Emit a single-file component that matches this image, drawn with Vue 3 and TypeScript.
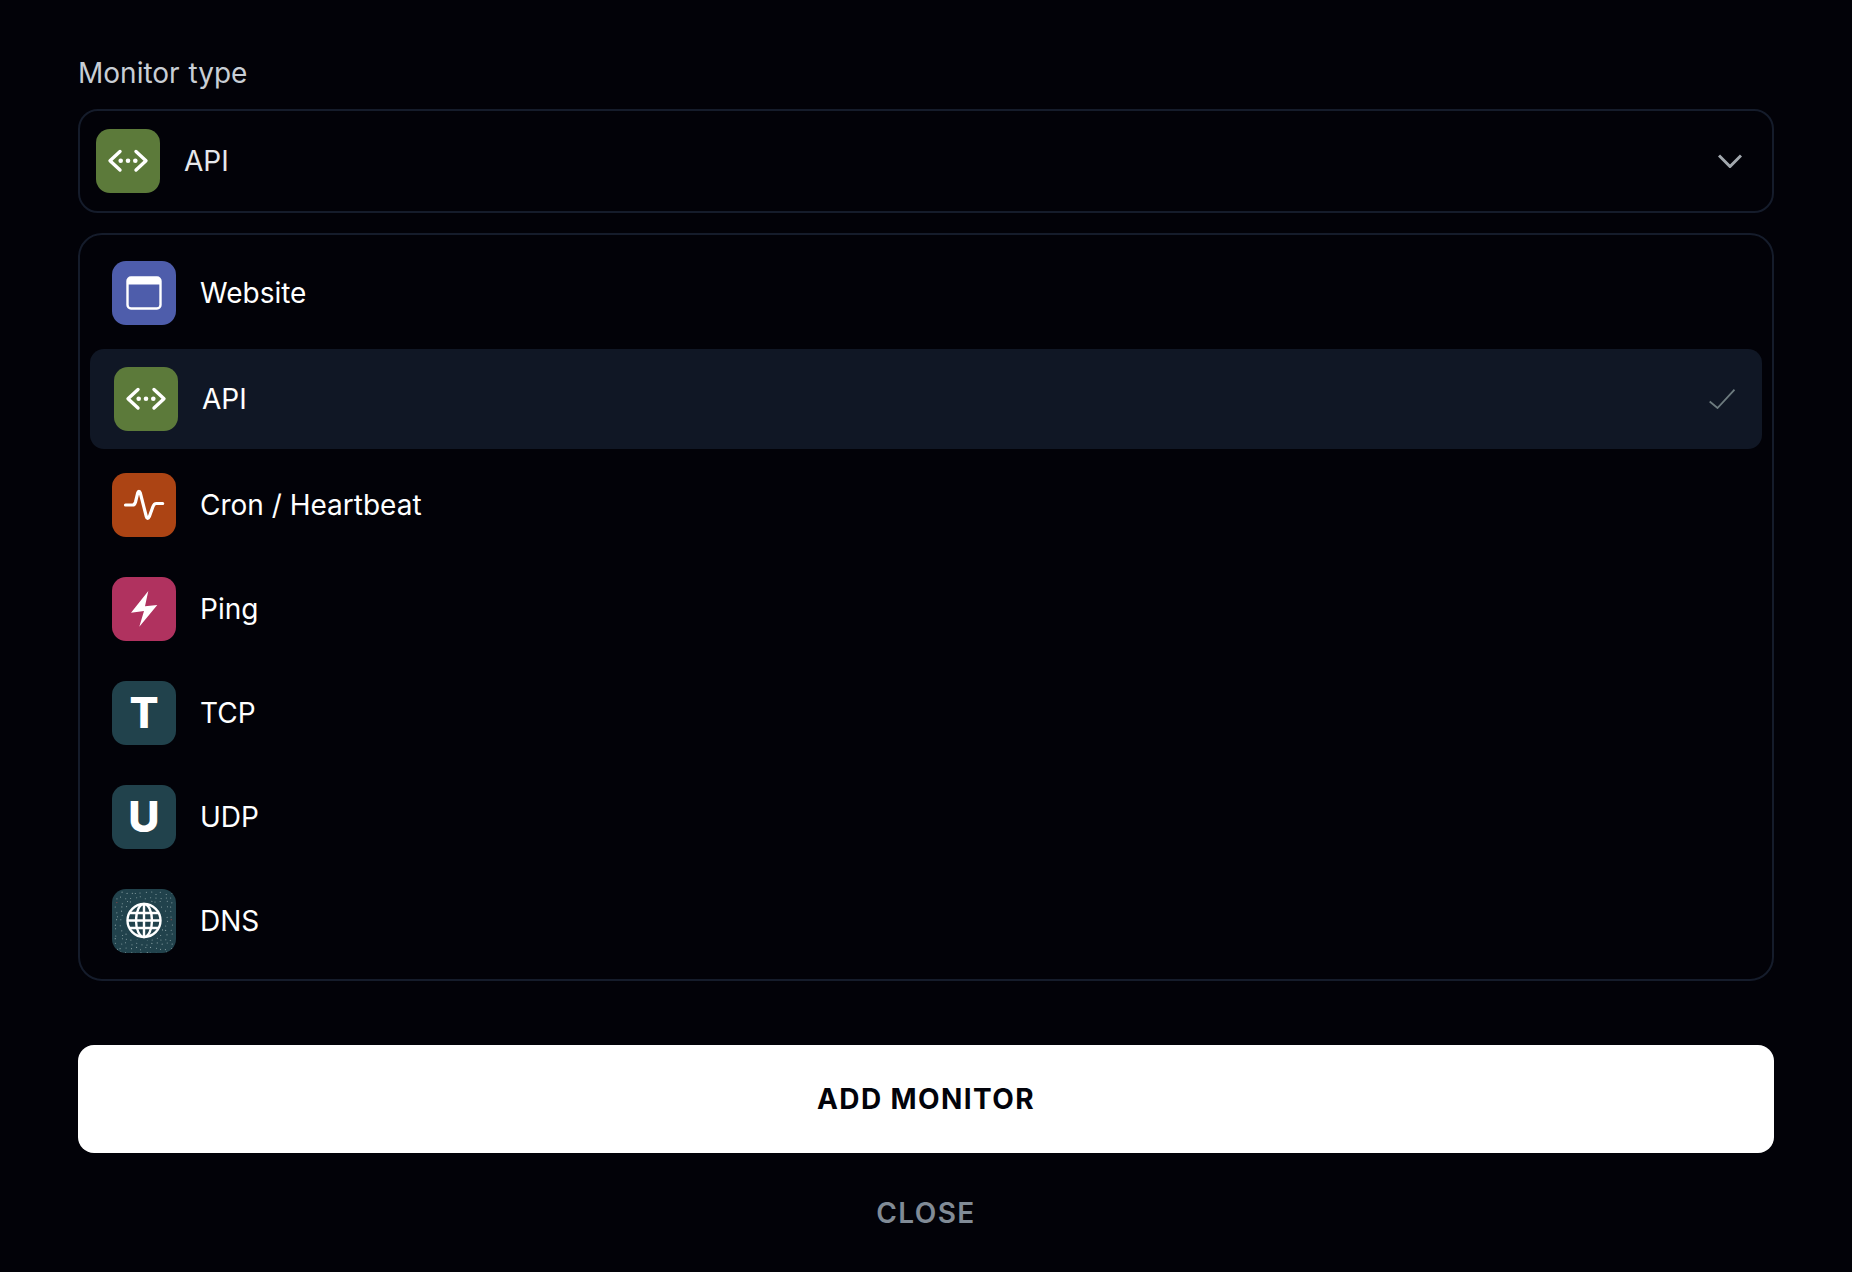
<script setup lang="ts">
type Row = { name: string; kind: string; selected?: boolean };
const rows: Row[] = [
  { name: 'Website', kind: 'web' },
  { name: 'API', kind: 'api', selected: true },
  { name: 'Cron / Heartbeat', kind: 'cron' },
  { name: 'Ping', kind: 'ping' },
  { name: 'TCP', kind: 'tcp' },
  { name: 'UDP', kind: 'udp' },
  { name: 'DNS', kind: 'dns' },
];
// Seeded speckle for the DNS tile
let seed = 17;
const rnd = () => {
  seed = (seed * 16807) % 2147483647;
  return seed / 2147483647;
};
const dots: { x: number; y: number; red: boolean }[] = [];
for (let y = 3; y < 63; y += 4.6) {
  for (let x = 3; x < 63; x += 5) {
    dots.push({ x: x + rnd() * 2.6, y: y + rnd() * 2.6, red: rnd() < 0.02 });
  }
}
</script>

<template>
  <main class="page">
    <div class="label">Monitor type</div>
    <div class="select">
      <span class="tile api">
        <svg viewBox="0 0 64 64" class="glyph">
          <path d="M24 22.500 14 31.700 24 41M40 22.500 50 31.700 40 41" fill="none" stroke="#fff" stroke-width="3.400" stroke-linecap="round" stroke-linejoin="round" />
          <circle cx="24.700" cy="31.700" r="2.300" fill="#fff" /><circle cx="32" cy="31.700" r="2.300" fill="#fff" /><circle cx="39.300" cy="31.700" r="2.300" fill="#fff" />
        </svg>
      </span>
      <span class="select-text">API</span>
      <svg class="chevron" viewBox="0 0 24 14">
        <path d="M1 1.500 12 12.500 23 1.500" fill="none" stroke="#a2a8ae" stroke-width="3" />
      </svg>
    </div>

    <div class="list">
      <div v-for="r in rows" :key="r.name" class="row" :class="{ selected: r.selected }">
        <span class="tile" :class="r.kind">
          <svg v-if="r.kind === 'web'" viewBox="0 0 64 64" class="glyph">
            <rect x="15.500" y="16.500" width="33" height="31" rx="3.500" fill="none" stroke="#fff" stroke-width="2.400" />
            <path d="M16 20a3.500 3.500 0 0 1 3.500-3.500h25A3.500 3.500 0 0 1 48 20v3.500H16z" fill="#fff" />
          </svg>
          <svg v-else-if="r.kind === 'api'" viewBox="0 0 64 64" class="glyph">
            <path d="M24 22.500 14 31.700 24 41M40 22.500 50 31.700 40 41" fill="none" stroke="#fff" stroke-width="3.400" stroke-linecap="round" stroke-linejoin="round" />
            <circle cx="24.700" cy="31.700" r="2.300" fill="#fff" /><circle cx="32" cy="31.700" r="2.300" fill="#fff" /><circle cx="39.300" cy="31.700" r="2.300" fill="#fff" />
          </svg>
          <svg v-else-if="r.kind === 'cron'" viewBox="0 0 64 64" class="glyph">
            <path d="M13.500 32h7c1.600 0 2.400-.8 3-3l2.200-9c.5-2.200 2-2.200 2.600 0l6 23.500c.6 2.400 2 2.400 3 .2l3.600-10c.7-2 1.600-3.200 3.500-3.200h6.300" fill="none" stroke="#fff" stroke-width="3.200" stroke-linecap="round" stroke-linejoin="round" />
          </svg>
          <svg v-else-if="r.kind === 'ping'" viewBox="0 0 64 64" class="glyph">
            <path d="M36.300 14 19 35.700 32 34 27.300 49.700 45.300 28 33 29.300z" fill="#fff" />
          </svg>
          <span v-else-if="r.kind === 'tcp'" class="letter">T</span>
          <span v-else-if="r.kind === 'udp'" class="letter">U</span>
          <svg v-else viewBox="0 0 64 64" class="glyph">
            <circle v-for="(d, i) in dots" :key="i" :cx="d.x" :cy="d.y" r="0.55" :fill="d.red ? '#a34a4a' : '#8fa5a8'" />
            <circle cx="32" cy="31.500" r="20" fill="#21424c" />
            <g fill="none" stroke="#fff" stroke-width="2.400">
              <circle cx="32" cy="31.500" r="16.500" />
              <ellipse cx="32" cy="31.500" rx="8" ry="16.500" />
              <path d="M32 15v33M15.500 31.500h33M18 24h28M18 39h28" />
            </g>
          </svg>
        </span>
        <span class="name">{{ r.name }}</span>
        <svg v-if="r.selected" class="check" viewBox="0 0 26 20">
          <path d="M0.700 12.500 8.500 19 25.500 0.700" fill="none" stroke="#6d7b7f" stroke-width="1.800" />
        </svg>
      </div>
    </div>

    <button class="add" type="button">ADD MONITOR</button>
    <button class="close" type="button">CLOSE</button>
  </main>
</template>

<style>
html, body { background: #020208; }
</style>

<style scoped>
.page {
  box-sizing: border-box;
  width: 1852px;
  height: 1272px;
  padding: 53px 78px 0;
  background: #020208;
  display: flex;
  flex-direction: column;
  font-family: Inter, "Liberation Sans", sans-serif;
}
.label {
  font-size: 28px;
  line-height: 40px;
  color: #c8ced5;
  margin-bottom: 16px;
  word-spacing: 1px;
}
.select {
  box-sizing: border-box;
  height: 104px;
  border: 2px solid #151c2b;
  border-radius: 20px;
  padding: 0 30px 0 16px;
  display: flex;
  align-items: center;
  gap: 24px;
  margin-bottom: 20px;
}
.select-text {
  font-size: 28px;
  color: #e6e8eb;
  flex: 1;
}
.chevron { width: 24px; height: 14px; }
.list {
  box-sizing: border-box;
  height: 748px;
  border: 2px solid #151c2b;
  border-radius: 24px;
  padding: 6px 10px;
  margin-bottom: 64px;
}
.row {
  height: 104px;
  display: flex;
  align-items: center;
  gap: 24px;
  padding: 0 22px;
  font-size: 28px;
  color: #fff;
}
.row.selected {
  height: 100px;
  margin: 4px 0;
  padding: 0 24px;
  background: #101725;
  border-radius: 14px;
}
.name { flex: 1; }
.check { width: 26px; height: 20px; margin-right: 3px; }
.tile {
  width: 64px;
  height: 64px;
  flex: none;
  border-radius: 14px;
  display: flex;
  align-items: center;
  justify-content: center;
  overflow: hidden;
}
.glyph { width: 64px; height: 64px; display: block; }
.web { background: #4e5dab; }
.api { background: #5c7a3a; }
.cron { background: #ac4414; }
.ping { background: #b0325f; }
.tcp, .udp, .dns { background: #21424c; }
.letter {
  font-size: 43px;
  font-weight: 800;
  line-height: 1;
  color: #fff;
  margin-top: -1px;
}
.add {
  height: 108px;
  border: 0;
  border-radius: 16px;
  background: #fff;
  color: #02030a;
  font-family: inherit;
  font-size: 28px;
  font-weight: 700;
  letter-spacing: 1.400px;
  padding: 0;
  margin-bottom: 40px;
}
.close {
  height: 40px;
  border: 0;
  background: none;
  color: #818b96;
  font-family: inherit;
  font-size: 28px;
  font-weight: 600;
  letter-spacing: 1.400px;
  padding: 0;
}
</style>
